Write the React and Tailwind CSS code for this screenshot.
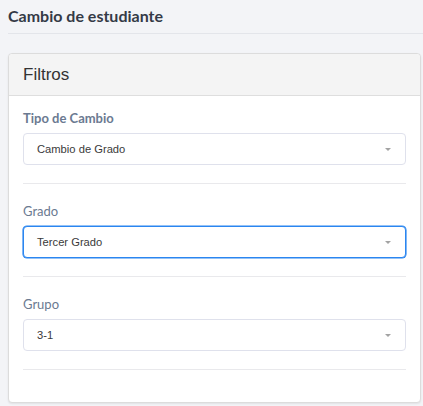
import React from "react";

function Caret() {
  return (
    <svg width="6" height="3" viewBox="0 0 6 3" className="mr-[1px] shrink-0">
      <path d="M0 0 L6 0 L3 3 Z" fill="#a3a3a3" />
    </svg>
  );
}

function SelectBox({ value, focused }) {
  return (
    <div
      className={
        "flex h-[32px] items-center justify-between rounded-[4px] bg-white pl-[13px] pr-[13px] " +
        (focused
          ? "border border-[#2b86f0] shadow-[0_0_0_0.6px_#2b86f0]"
          : "border border-[#dfe1ec]")
      }
    >
      <span className="text-[11.2px] text-[#3a3a3a] [font-family:'Liberation_Sans',Arial,sans-serif]">
        {value}
      </span>
      <Caret />
    </div>
  );
}

function Field({ label, value, focused, bold, first }) {
  return (
    <div className={first ? "" : "mt-[18px]"}>
      <div
        className={
          "mb-[6px] h-[18px] text-[13px] leading-[18px] text-[#6b7a91] [font-family:Lato,sans-serif] " +
          (bold ? "font-bold" : "font-normal")
        }
      >
        {label}
      </div>
      <SelectBox value={value} focused={focused} />
      <div className="mt-[18px] h-px bg-[#e9e9ec]" />
    </div>
  );
}

export default function App() {
  return (
    <div className="min-h-[406px] w-[423px] bg-[#f3f4f7] pt-[4px] pb-[3px]">
      <div className="ml-2 border-b border-[#e3e5ea] pb-[5px]">
        <h1 className="h-[24px] text-[16px] font-bold leading-[24px] text-[#343a46] [font-family:Lato,sans-serif]">
          Cambio de estudiante
        </h1>
      </div>
      <div className="ml-2 mr-[2px] mt-[19px] rounded-[4px] border border-[#dcdcdc] bg-white shadow-[0_1px_2px_rgba(0,0,0,0.08)]">
        <div className="flex h-[42px] items-center rounded-t-[4px] border-b border-[#dedede] bg-[#f4f4f4] px-[14px]">
          <span className="text-[17px] text-[#333333] [font-family:'Liberation_Sans',Arial,sans-serif]">
            Filtros
          </span>
        </div>
        <div className="px-[14px] pt-[13px] pb-[32px]">
          <Field label="Tipo de Cambio" value="Cambio de Grado" bold first />
          <Field label="Grado" value="Tercer Grado" focused />
          <Field label="Grupo" value="3-1" />
        </div>
      </div>
    </div>
  );
}
